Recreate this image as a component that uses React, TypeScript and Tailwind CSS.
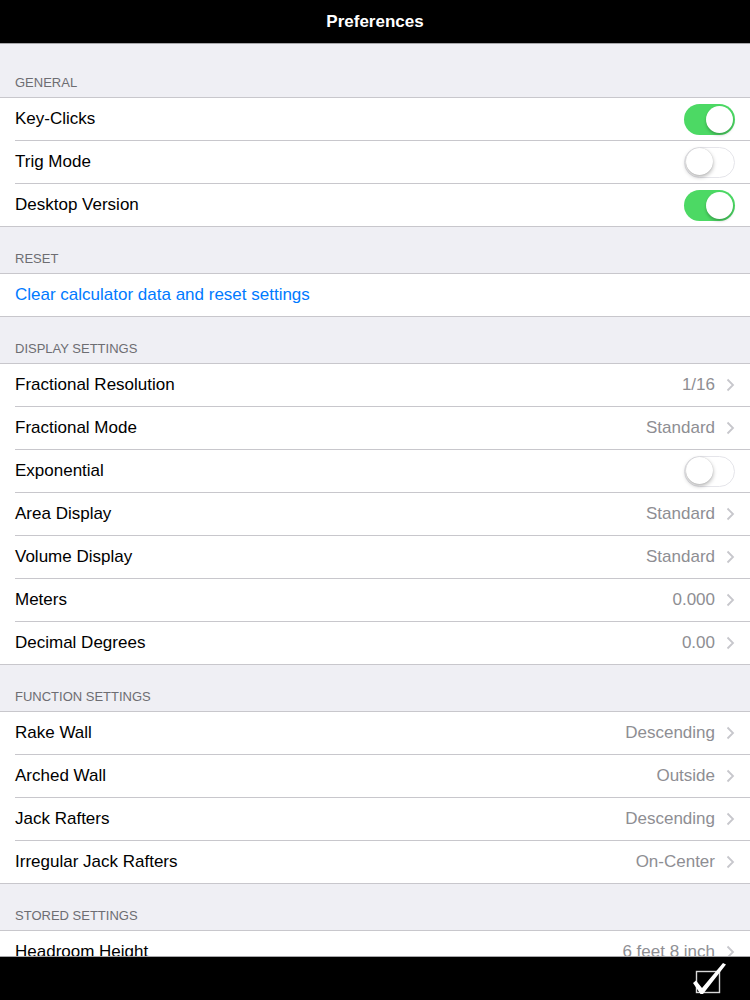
import React from "react";

const FONT = { fontFamily: '"Liberation Sans", Arial, sans-serif' };

type Row = {
  label: string;
  value?: string;
  toggle?: boolean;
  link?: boolean;
};

function Toggle({ on }: { on: boolean }) {
  return on ? (
    <div className="relative h-[31px] w-[51px] rounded-full bg-[#4cd964]">
      <div className="absolute right-[2px] top-[2px] h-[27px] w-[27px] rounded-full bg-white shadow-[0_2px_3px_rgba(0,0,0,0.25)]" />
    </div>
  ) : (
    <div className="relative h-[31px] w-[51px] rounded-full border-[1.5px] border-[#e5e5ea] bg-white">
      <div className="absolute left-[0.5px] top-[0.5px] h-[27px] w-[27px] rounded-full bg-white shadow-[0_2px_4px_rgba(0,0,0,0.3),0_0_1px_rgba(0,0,0,0.2)]" />
    </div>
  );
}

function Chevron() {
  return (
    <svg width="9" height="14" viewBox="0 0 9 14" className="ml-[11px]">
      <path d="M1.5 1.5 L7 7 L1.5 12.5" fill="none" stroke="#c7c7cc" strokeWidth="1.8" />
    </svg>
  );
}

function Group({ title, rows, first }: { title: string; rows: Row[]; first?: boolean }) {
  return (
    <div>
      <div
        className={`flex items-end px-[15px] pb-[7px] text-[13px] leading-[15px] text-[#6d6d72] ${
          first ? "h-[53px]" : "h-[46px]"
        }`}
      >
        {title}
      </div>
      <div className="border-t border-[#c8c7cc] bg-white">
        {rows.map((r, i) => {
          const last = i === rows.length - 1;
          return (
            <div key={r.label} className={`h-[43px] ${last ? "border-b border-[#c8c7cc]" : ""}`}>
              <div className={`flex h-full items-center ml-[15px] pr-[15px] ${last ? "" : "border-b border-[#c8c7cc]"}`}>
                <span className={`flex-1 text-[17px] ${r.link ? "text-[#007aff]" : "text-black"}`}>{r.label}</span>
                {r.toggle !== undefined ? (
                  <Toggle on={r.toggle} />
                ) : r.value !== undefined ? (
                  <div className="flex items-center">
                    <span className="text-[17px] text-[#8e8e93]">{r.value}</span>
                    <Chevron />
                  </div>
                ) : null}
              </div>
            </div>
          );
        })}
      </div>
    </div>
  );
}

export default function App() {
  return (
    <div className="flex h-[1000px] w-[750px] flex-col overflow-hidden bg-[#efeff4]" style={FONT}>
      <div className="flex h-[44px] shrink-0 items-center justify-center border-b border-[#a7a7aa] bg-black">
        <span className="text-[17px] font-semibold text-white">Preferences</span>
      </div>
      <div className="flex-1 overflow-hidden">
        <Group
          first
          title="GENERAL"
          rows={[
            { label: "Key-Clicks", toggle: true },
            { label: "Trig Mode", toggle: false },
            { label: "Desktop Version", toggle: true },
          ]}
        />
        <Group title="RESET" rows={[{ label: "Clear calculator data and reset settings", link: true }]} />
        <Group
          title="DISPLAY SETTINGS"
          rows={[
            { label: "Fractional Resolution", value: "1/16" },
            { label: "Fractional Mode", value: "Standard" },
            { label: "Exponential", toggle: false },
            { label: "Area Display", value: "Standard" },
            { label: "Volume Display", value: "Standard" },
            { label: "Meters", value: "0.000" },
            { label: "Decimal Degrees", value: "0.00" },
          ]}
        />
        <Group
          title="FUNCTION SETTINGS"
          rows={[
            { label: "Rake Wall", value: "Descending" },
            { label: "Arched Wall", value: "Outside" },
            { label: "Jack Rafters", value: "Descending" },
            { label: "Irregular Jack Rafters", value: "On-Center" },
          ]}
        />
        <Group title="STORED SETTINGS" rows={[{ label: "Headroom Height", value: "6 feet 8 inch" }]} />
      </div>
      <div className="flex h-[44px] shrink-0 items-center justify-end border-t border-[#a7a7aa] bg-black pr-[22px]">
        <svg width="36" height="34" viewBox="0 0 36 34">
          <rect x="4.5" y="9.5" width="23" height="21" fill="none" stroke="#d8d8d8" strokeWidth="1.4" />
          <path d="M1 21 L4 18.5 L10 26 L31 1 L34 2.5 L11 32 L8.5 32 Z" fill="white" />
        </svg>
      </div>
    </div>
  );
}
